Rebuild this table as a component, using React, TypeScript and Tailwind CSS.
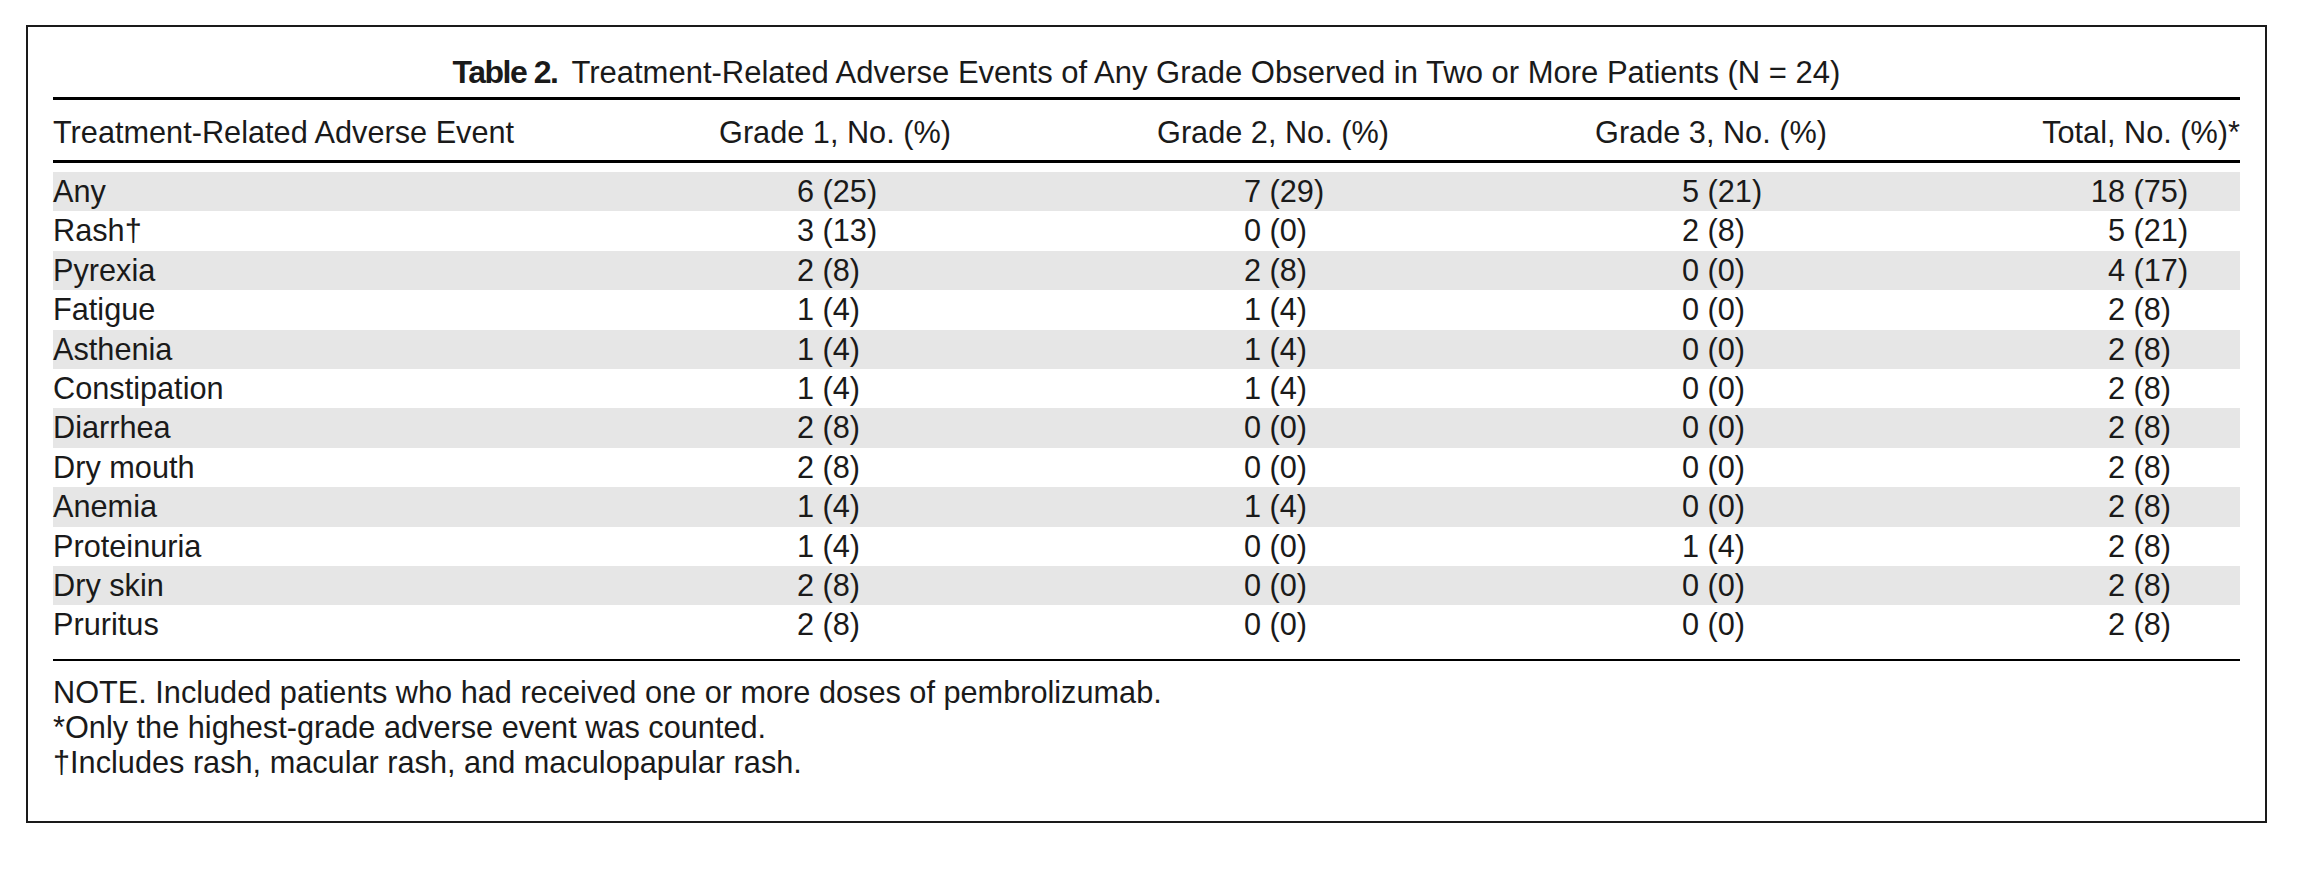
const rows: [string, string, string, string, string][] = [
  ["Any", "6 (25)", "7 (29)", "5 (21)", "18 (75)"],
  ["Rash†", "3 (13)", "0 (0)", "2 (8)", "5 (21)"],
  ["Pyrexia", "2 (8)", "2 (8)", "0 (0)", "4 (17)"],
  ["Fatigue", "1 (4)", "1 (4)", "0 (0)", "2 (8)"],
  ["Asthenia", "1 (4)", "1 (4)", "0 (0)", "2 (8)"],
  ["Constipation", "1 (4)", "1 (4)", "0 (0)", "2 (8)"],
  ["Diarrhea", "2 (8)", "0 (0)", "0 (0)", "2 (8)"],
  ["Dry mouth", "2 (8)", "0 (0)", "0 (0)", "2 (8)"],
  ["Anemia", "1 (4)", "1 (4)", "0 (0)", "2 (8)"],
  ["Proteinuria", "1 (4)", "0 (0)", "1 (4)", "2 (8)"],
  ["Dry skin", "2 (8)", "0 (0)", "0 (0)", "2 (8)"],
  ["Pruritus", "2 (8)", "0 (0)", "0 (0)", "2 (8)"],
];

// count is right-aligned to a fixed edge, the percent follows it
function Cell({ value, edge }: { value: string; edge: string }) {
  const [count, pct] = value.split(" ");
  return (
    <div className="flex whitespace-pre">
      <span className={`${edge} text-right`}>{count}</span>
      <span> {pct}</span>
    </div>
  );
}

export default function App() {
  return (
    <div
      className="min-h-screen bg-white pt-[25px] pl-[26px] text-[30.7px] text-[#1a1a1a]"
      style={{ fontFamily: '"Liberation Sans", Arial, sans-serif' }}
    >
      <div className="h-[798px] w-[2241px] border-2 border-[#1a1a1a] px-[25px]">
        {/* title */}
        <div className="pt-[28px] text-center text-[31px] leading-[35px]">
          <span className="text-[32px] font-bold tracking-[-1.5px]">Table 2.</span>
          <span className="ml-[14px]">
            Treatment-Related Adverse Events of Any Grade Observed in Two or More Patients (N = 24)
          </span>
        </div>
        <div className="mt-[7px] border-t-[3px] border-black" />

        {/* header */}
        <div className="grid grid-cols-[563px_438px_438px_438px_310px] pt-[16px] pb-[10px] leading-[34px]">
          <div>Treatment-Related Adverse Event</div>
          <div className="text-center">Grade 1, No. (%)</div>
          <div className="text-center">Grade 2, No. (%)</div>
          <div className="text-center">Grade 3, No. (%)</div>
          <div className="text-right">Total, No. (%)*</div>
        </div>
        <div className="border-t-[3px] border-black" />

        {/* body */}
        <div className="mt-[9px]">
          {rows.map((r, i) => (
            <div
              key={r[0]}
              className={`grid h-[39.42px] grid-cols-[563px_438px_438px_438px_310px] leading-[39.42px] ${
                i % 2 === 0 ? "bg-[#e6e6e6]" : ""
              }`}
            >
              <div>{r[0]}</div>
              <Cell value={r[1]} edge="w-[198px]" />
              <Cell value={r[2]} edge="w-[207px]" />
              <Cell value={r[3]} edge="w-[207px]" />
              <Cell value={r[4]} edge="w-[195px]" />
            </div>
          ))}
        </div>
        <div className="mt-[14px] border-t-2 border-black" />

        {/* notes */}
        <div className="mt-[14px] leading-[35px]">
          <p>NOTE. Included patients who had received one or more doses of pembrolizumab.</p>
          <p>*Only the highest-grade adverse event was counted.</p>
          <p>†Includes rash, macular rash, and maculopapular rash.</p>
        </div>
      </div>
    </div>
  );
}
